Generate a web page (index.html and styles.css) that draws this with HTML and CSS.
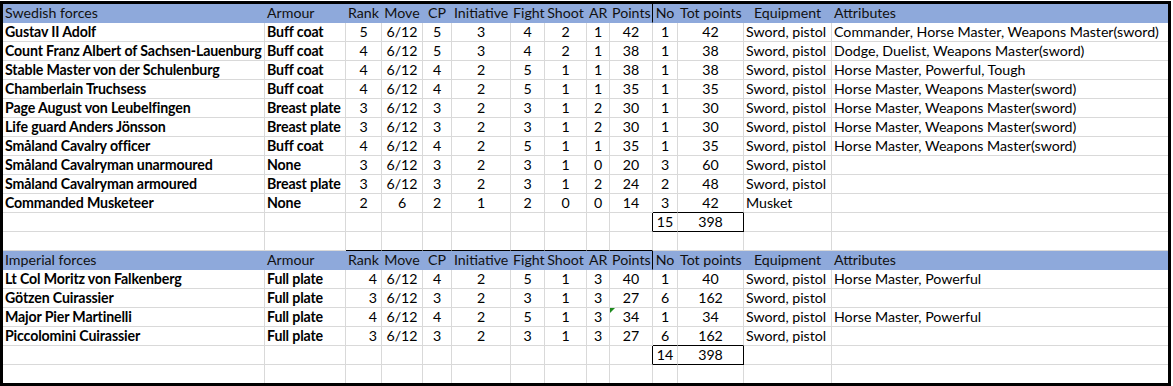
FILE: index.html
```html
<!DOCTYPE html>
<html lang="en">
<head>
<meta charset="utf-8">
<title>Forces</title>
<link rel="stylesheet" href="styles.css">
</head>
<body>
<div class="sheet">
  <div class="row hdr">
    <div class="l">Swedish forces</div><div class="l">Armour</div><div>Rank</div><div>Move</div><div>CP</div><div>Initiative</div><div>Fight</div><div>Shoot</div><div>AR</div><div class="brk">Points</div><div>No</div><div>Tot points</div><div>Equipment</div><div class="l">Attributes</div>
  </div>
  <div class="row">
    <div class="l b">Gustav II Adolf</div><div class="l b">Buff coat</div><div>5</div><div>6/12</div><div>5</div><div>3</div><div>4</div><div>2</div><div>1</div><div>42</div><div>1</div><div>42</div><div class="l">Sword, pistol</div><div class="l">Commander, Horse Master, Weapons Master(sword)</div>
  </div>
  <div class="row">
    <div class="l b">Count Franz Albert of Sachsen-Lauenburg</div><div class="l b">Buff coat</div><div>4</div><div>6/12</div><div>5</div><div>3</div><div>4</div><div>2</div><div>1</div><div>38</div><div>1</div><div>38</div><div class="l">Sword, pistol</div><div class="l">Dodge, Duelist, Weapons Master(sword)</div>
  </div>
  <div class="row">
    <div class="l b">Stable Master von der Schulenburg</div><div class="l b">Buff coat</div><div>4</div><div>6/12</div><div>4</div><div>2</div><div>5</div><div>1</div><div>1</div><div>38</div><div>1</div><div>38</div><div class="l">Sword, pistol</div><div class="l">Horse Master, Powerful, Tough</div>
  </div>
  <div class="row">
    <div class="l b">Chamberlain Truchsess</div><div class="l b">Buff coat</div><div>4</div><div>6/12</div><div>4</div><div>2</div><div>5</div><div>1</div><div>1</div><div>35</div><div>1</div><div>35</div><div class="l">Sword, pistol</div><div class="l">Horse Master, Weapons Master(sword)</div>
  </div>
  <div class="row">
    <div class="l b">Page August von Leubelfingen</div><div class="l b">Breast plate</div><div>3</div><div>6/12</div><div>3</div><div>2</div><div>3</div><div>1</div><div>2</div><div>30</div><div>1</div><div>30</div><div class="l">Sword, pistol</div><div class="l">Horse Master, Weapons Master(sword)</div>
  </div>
  <div class="row">
    <div class="l b">Life guard Anders Jönsson</div><div class="l b">Breast plate</div><div>3</div><div>6/12</div><div>3</div><div>2</div><div>3</div><div>1</div><div>2</div><div>30</div><div>1</div><div>30</div><div class="l">Sword, pistol</div><div class="l">Horse Master, Weapons Master(sword)</div>
  </div>
  <div class="row">
    <div class="l b">Småland Cavalry officer</div><div class="l b">Buff coat</div><div>4</div><div>6/12</div><div>4</div><div>2</div><div>5</div><div>1</div><div>1</div><div>35</div><div>1</div><div>35</div><div class="l">Sword, pistol</div><div class="l">Horse Master, Weapons Master(sword)</div>
  </div>
  <div class="row">
    <div class="l b">Småland Cavalryman unarmoured</div><div class="l b">None</div><div>3</div><div>6/12</div><div>3</div><div>2</div><div>3</div><div>1</div><div>0</div><div>20</div><div>3</div><div>60</div><div class="l">Sword, pistol</div><div class="l"></div>
  </div>
  <div class="row">
    <div class="l b">Småland Cavalryman armoured</div><div class="l b">Breast plate</div><div>3</div><div>6/12</div><div>3</div><div>2</div><div>3</div><div>1</div><div>2</div><div>24</div><div>2</div><div>48</div><div class="l">Sword, pistol</div><div class="l"></div>
  </div>
  <div class="row">
    <div class="l b">Commanded Musketeer</div><div class="l b">None</div><div>2</div><div>6</div><div>2</div><div>1</div><div>2</div><div>0</div><div>0</div><div>14</div><div class="bbk">3</div><div class="bbk">42</div><div class="l">Musket</div><div class="l"></div>
  </div>
  <div class="row">
    <div></div><div></div><div></div><div></div><div></div><div></div><div></div><div></div><div></div><div class="brk"></div><div class="bbk">15</div><div class="bbk brk">398</div><div></div><div></div>
  </div>
  <div class="row">
    <div></div><div></div><div class="bbk"></div><div class="bbk"></div><div class="bbk"></div><div class="bbk"></div><div class="bbk"></div><div class="bbk"></div><div class="bbk"></div><div class="bbk"></div><div></div><div></div><div></div><div></div>
  </div>
  <div class="row hdr">
    <div class="l">Imperial forces</div><div class="l">Armour</div><div>Rank</div><div>Move</div><div>CP</div><div>Initiative</div><div>Fight</div><div>Shoot</div><div>AR</div><div class="brk">Points</div><div>No</div><div>Tot points</div><div>Equipment</div><div class="l">Attributes</div>
  </div>
  <div class="row">
    <div class="l b">Lt Col Moritz von Falkenberg</div><div class="l b">Full plate</div><div class="r">4</div><div>6/12</div><div>4</div><div>2</div><div>5</div><div>1</div><div>3</div><div>40</div><div>1</div><div>40</div><div class="l">Sword, pistol</div><div class="l">Horse Master, Powerful</div>
  </div>
  <div class="row">
    <div class="l b">Götzen Cuirassier</div><div class="l b">Full plate</div><div class="r">3</div><div>6/12</div><div>3</div><div>2</div><div>3</div><div>1</div><div>3</div><div>27</div><div>6</div><div>162</div><div class="l">Sword, pistol</div><div class="l"></div>
  </div>
  <div class="row">
    <div class="l b">Major Pier Martinelli</div><div class="l b">Full plate</div><div class="r">4</div><div>6/12</div><div>4</div><div>2</div><div>5</div><div>1</div><div>3</div><div><span class="flag"></span>34</div><div>1</div><div>34</div><div class="l">Sword, pistol</div><div class="l">Horse Master, Powerful</div>
  </div>
  <div class="row">
    <div class="l b">Piccolomini Cuirassier</div><div class="l b">Full plate</div><div class="r">3</div><div>6/12</div><div>3</div><div>2</div><div>3</div><div>1</div><div>3</div><div>27</div><div class="bbk">6</div><div class="bbk">162</div><div class="l">Sword, pistol</div><div class="l"></div>
  </div>
  <div class="row">
    <div></div><div></div><div></div><div></div><div></div><div></div><div></div><div></div><div></div><div class="brk"></div><div class="bbk">14</div><div class="bbk brk">398</div><div></div><div></div>
  </div>
  <div class="row">
    <div></div><div></div><div></div><div></div><div></div><div></div><div></div><div></div><div></div><div></div><div></div><div></div><div></div><div></div>
  </div>
</div>
</body>
</html>
```
FILE: styles.css
```css
body {
  margin: 0;
  background: #fff;
}

.sheet {
  margin-top: 1px;
  width: 1165px;
  border: 3px solid #000;
  font-family: Lato, "Liberation Sans", sans-serif;
  font-size: 14.2px;
  color: #000;
}

.row {
  display: grid;
  grid-template-columns: 262px 81px 36px 41px 29px 59px 34px 42px 23px 43px 25px 66px 88px 336px;
  height: 19px;
}

.row:last-child {
  height: 18px;
}

.row > div {
  position: relative;
  box-sizing: border-box;
  height: 19px;
  padding: 0 2px;
  border-right: 1px solid #d9d9d9;
  border-bottom: 1px solid #d9d9d9;
  line-height: 18px;
  white-space: nowrap;
  text-align: center;
}

.row:last-child > div {
  height: 18px;
  border-bottom: 0;
}

.row > div:last-child {
  border-right: 0;
}

.hdr > div {
  background: #8ea9db;
  border-color: #8ea9db;
  color: #111;
}

.row > .l {
  text-align: left;
}

.row > .r {
  text-align: right;
  padding-right: 4px;
}

.b {
  font-weight: 700;
  letter-spacing: -0.15px;
}

.row > .brk {
  border-right-color: #000;
}

.row > .bbk {
  border-bottom-color: #000;
}

.flag {
  position: absolute;
  top: 0;
  left: 0;
  width: 0;
  height: 0;
  border-top: 5px solid #1d8a1d;
  border-right: 5px solid transparent;
}
```
